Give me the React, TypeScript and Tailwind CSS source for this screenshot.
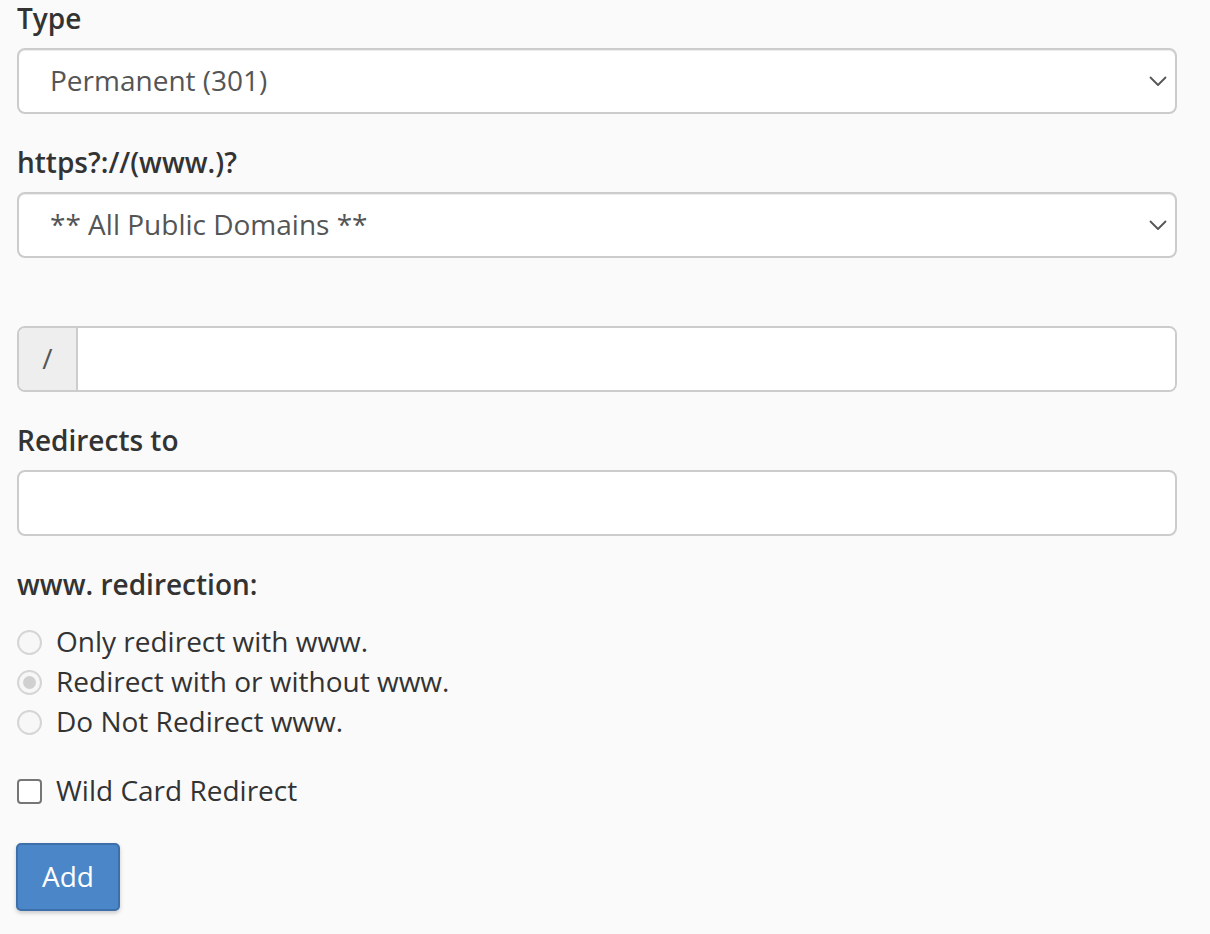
import React from "react";

const font = { fontFamily: '"Open Sans", "Noto Sans", sans-serif' };

function Chevron() {
  return (
    <svg
      className="pointer-events-none absolute right-[8px] top-1/2 -translate-y-1/2"
      width="18"
      height="12"
      viewBox="0 0 18 12"
      fill="none"
    >
      <path d="M1.5 2.5l7.5 7.5 7.5-7.5" stroke="#555" strokeWidth="1.8" strokeLinecap="round" strokeLinejoin="round" />
    </svg>
  );
}

function Label({ children, className = "" }: { children: React.ReactNode; className?: string }) {
  return (
    <div className={`h-[36px] text-[28px] font-semibold leading-[34px] text-[#333] ${className}`}>{children}</div>
  );
}

function Select({ value }: { value: string }) {
  return (
    <div className="relative mt-[11px] h-[66px] w-full rounded-[8px] border-2 border-[#ccc] bg-white shadow-[inset_0_1px_1px_rgba(0,0,0,0.075)]">
      <div className="flex h-full items-center pb-[2px] pl-[31px] text-[28px] text-[#555]">{value}</div>
      <Chevron />
    </div>
  );
}

function Radio({ checked, label }: { checked?: boolean; label: string }) {
  return (
    <label className="flex h-[40px] items-center">
      <span className="flex h-[25px] w-[25px] items-center justify-center rounded-full border-2 border-[#d5d5d5] bg-[#f7f7f7]">
        {checked && <span className="h-[13px] w-[13px] rounded-full bg-[#d0d0d0]" />}
      </span>
      <span className="ml-[14px] pb-[2px] text-[28px] text-[#333]">{label}</span>
    </label>
  );
}

export default function App() {
  return (
    <div className="min-h-[934px] bg-[#fafafa] pl-[17px] pr-[33px] pt-[1px]" style={font}>
      <Label>Type</Label>
      <Select value="Permanent (301)" />

      <Label className="mt-[31px]">https?://(www.)?</Label>
      <Select value="** All Public Domains **" />

      <div className="mt-[68px] flex h-[66px] w-full overflow-hidden rounded-[8px] border-2 border-[#ccc] bg-white">
        <div className="flex w-[59px] items-center justify-center border-r-2 border-[#ccc] bg-[#eee] pb-[2px] text-[28px] text-[#555]">
          /
        </div>
        <input className="flex-1 bg-white px-4 text-[28px] text-[#555] outline-none" />
      </div>

      <Label className="mt-[31px]">Redirects to</Label>
      <input className="mt-[11px] block h-[66px] w-full rounded-[8px] border-2 border-[#ccc] bg-white px-4 text-[28px] text-[#555] outline-none" />

      <Label className="mt-[31px]">www. redirection:</Label>
      <div className="mt-[19px]">
        <Radio label="Only redirect with www." />
        <Radio checked label="Redirect with or without www." />
        <Radio label="Do Not Redirect www." />
      </div>

      <label className="mt-[29px] flex h-[40px] items-center">
        <span className="h-[25px] w-[25px] rounded-[4px] border-2 border-[#767676] bg-white" />
        <span className="ml-[14px] pb-[2px] text-[28px] text-[#333]">Wild Card Redirect</span>
      </label>

      <button className="-ml-[1px] mt-[32px] block h-[68px] w-[104px] rounded-[5px] border-2 border-[#3d70aa] bg-[#4a86c8] pb-[2px] text-[28px] text-white shadow-[0_2px_4px_rgba(0,0,0,0.2)]">
        Add
      </button>
    </div>
  );
}
